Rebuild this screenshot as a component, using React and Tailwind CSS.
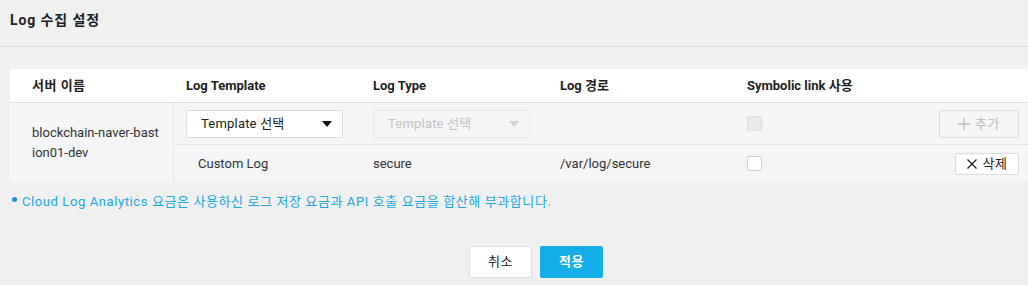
import React from "react";

const font = { fontFamily: "Roboto, 'Noto Sans CJK KR', 'Noto Sans', sans-serif" };

const Caret = ({ disabled }) => (
  <svg width="10" height="6" viewBox="0 0 10 6" className={disabled ? "text-[#d4d4d4]" : "text-[#111]"}>
    <path d="M0 0 L10 0 L5 6 Z" fill="currentColor" />
  </svg>
);

const Select = ({ disabled }) => (
  <div
    className={
      "w-[157px] h-[28px] rounded-[2px] border flex items-center justify-between pl-[14px] pr-[10px] text-[13px] tracking-[0.2px] " +
      (disabled ? "border-[#e6e8eb] bg-[#f4f5f7] text-[#c4c4c4]" : "border-[#dcdcdc] bg-white text-[#222]")
    }
  >
    <span>Template 선택</span>
    <Caret disabled={disabled} />
  </div>
);

export default function App() {
  return (
    <div style={font} className="w-[1028px] h-[285px] bg-[#f0f0f0] overflow-hidden">
      {/* Title */}
      <div className="h-[47px] border-b border-[#dddddd] flex items-center px-[10px] pb-[6px]">
        <h1 className="text-[14px] font-bold text-[#222] tracking-[0.9px]">Log 수집 설정</h1>
      </div>

      {/* Table */}
      <div className="ml-[10px] mt-[22px] w-[1018px] bg-white rounded-l-[3px] overflow-hidden">
        <div className="grid grid-cols-[164px_187px_187px_187px_1fr] h-[34px] items-center text-[13px] font-bold text-[#222] border-b border-[#dde1e6]">
          <div className="pl-[22px] tracking-[0.5px]">서버 이름</div>
          <div className="pl-[12px]">Log Template</div>
          <div className="pl-[12px]">Log Type</div>
          <div className="pl-[12px]">Log 경로</div>
          <div className="pl-[12px]">Symbolic link 사용</div>
        </div>

        <div className="flex bg-[#f4f5f7] text-[13px] text-[#333]">
          <div className="w-[164px] border-r border-[#e2e5e9] pl-[22px] flex items-center leading-[20px]">
            blockchain-naver-bast
            <br />
            ion01-dev
          </div>
          <div className="flex-1">
            <div className="grid grid-cols-[187px_187px_187px_1fr] h-[42px] items-center border-b border-[#e2e5e9]">
              <div className="pl-[12px]">
                <Select />
              </div>
              <div className="pl-[12px]">
                <Select disabled />
              </div>
              <div />
              <div className="flex items-center justify-between pl-[12px] pr-[9px]">
                <div className="w-[15px] h-[15px] rounded-[2px] border border-[#dcdcdc] bg-[#e9e9e9]" />
                <button className="w-[80px] h-[28px] rounded-[2px] border border-[#d6dbe1] text-[#bdbdbd] text-[13px] flex items-center justify-center gap-[5px]">
                  <svg width="12" height="12" viewBox="0 0 12 12">
                    <path d="M6 0 V12 M0 6 H12" stroke="currentColor" strokeWidth="1.3" />
                  </svg>
                  <span className="tracking-[0.5px]">추가</span>
                </button>
              </div>
            </div>
            <div className="grid grid-cols-[187px_187px_187px_1fr] h-[37px] items-center">
              <div className="pl-[24px]">Custom Log</div>
              <div className="pl-[12px]">secure</div>
              <div className="pl-[12px]">/var/log/secure</div>
              <div className="flex items-center justify-between pl-[12px] pr-[9px]">
                <div className="w-[15px] h-[15px] rounded-[2px] border border-[#d0d0d0] bg-white" />
                <button className="w-[64px] h-[22px] rounded-[2px] border border-[#dcdcdc] bg-white text-[#222] text-[13px] flex items-center justify-center gap-[6px]">
                  <svg width="10" height="10" viewBox="0 0 10 10">
                    <path d="M0.5 0.5 L9.5 9.5 M9.5 0.5 L0.5 9.5" stroke="#222" strokeWidth="1.3" />
                  </svg>
                  <span className="tracking-[0.5px]">삭제</span>
                </button>
              </div>
            </div>
          </div>
        </div>
      </div>

      {/* Note */}
      <div className="mt-[10px] pl-[12px] flex items-start gap-[5px] text-[13px] text-[#1aa9e6]">
        <span className="mt-[5px] w-[5px] h-[5px] rounded-full bg-[#1f8fd8] shrink-0" />
        <span className="tracking-[0.6px]">
          Cloud Log Analytics 요금은 사용하신 로그 저장 요금과 API 호출 요금을 합산해 부과합니다.
        </span>
      </div>

      {/* Actions */}
      <div className="mt-[34px] pl-[44px] flex justify-center gap-[8px]">
        <button className="w-[63px] h-[32px] rounded-[2px] border border-[#dddddd] bg-white text-[13px] text-[#222] tracking-[0.5px]">
          취소
        </button>
        <button className="w-[63px] h-[32px] rounded-[2px] bg-[#13ade8] text-[13px] font-bold text-white tracking-[0.5px]">
          적용
        </button>
      </div>
    </div>
  );
}
